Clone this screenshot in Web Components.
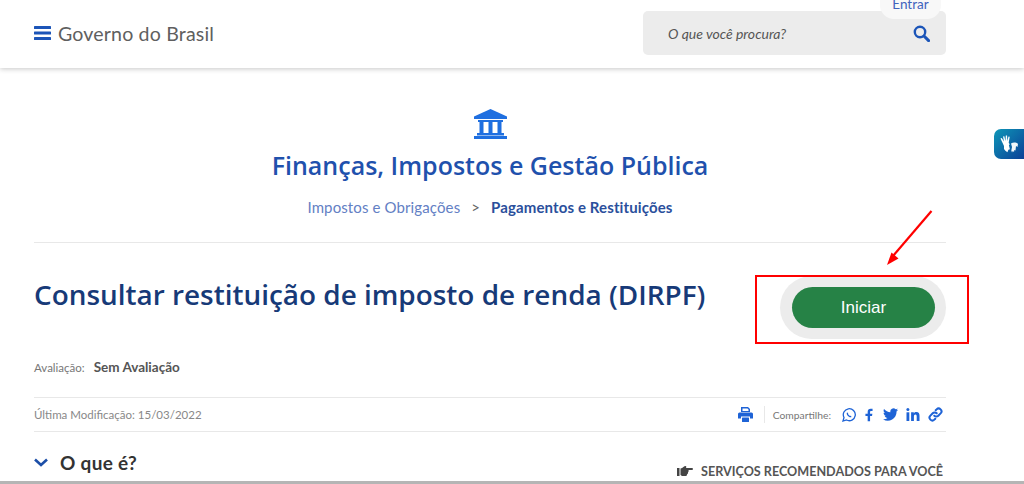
<!DOCTYPE html>
<html lang="pt-BR"><head><meta charset="utf-8"><title>Consultar restituição</title>
<style>
html,body{margin:0;padding:0;background:#fff;height:484px;overflow:hidden}
body{font-family:Lato,"Open Sans",sans-serif;position:relative}
gov-bottom{position:absolute;left:0;right:0;bottom:0}
</style></head><body>
<gov-header></gov-header>
<gov-category></gov-category>
<gov-main></gov-main>
<vlibras-tab></vlibras-tab>
<gov-bottom></gov-bottom>
<script>
function def(name,html){customElements.define(name,class extends HTMLElement{constructor(){super();this.attachShadow({mode:'open'}).innerHTML=html}})}
const blue='#1c55b8', bright='#1e63d6';
def('gov-header',`<style>
:host{display:flex;align-items:flex-start;justify-content:space-between;height:68px;padding:0 78px 0 34px;box-sizing:border-box;background:#fff;box-shadow:0 1px 5px rgba(0,0,0,.22);position:relative}
.brand{display:flex;align-items:center;gap:7px;height:66px;font-size:19.6px;color:#5f5f5f;letter-spacing:.15px}
.search{width:303px;height:44px;margin-top:11px;background:#ececec;border-radius:5px;display:flex;align-items:center;justify-content:space-between;padding:0 16px 0 25px;box-sizing:border-box;position:relative;font-size:14px;font-style:italic;color:#555}
.entrar{position:absolute;left:237px;top:-11px;width:61px;height:19px;background:#f8f8f8;border-radius:0 0 14px 14px;text-align:center;font-style:normal;font-size:13.5px;line-height:9px;color:#3f63bd}
svg{display:block}
</style><div class="brand"><svg width="17" height="14" viewBox="0 0 17 14" fill="${blue}"><rect width="17" height="3" y="0" rx=".6"/><rect width="17" height="3" y="5.5" rx=".6"/><rect width="17" height="3" y="11" rx=".6"/></svg><span>Governo do Brasil</span></div>
<div class="search"><span>O que você procura?</span><svg width="17" height="17" viewBox="0 0 17 17" fill="none" stroke="${blue}"><circle cx="7" cy="7" r="5.2" stroke-width="2.4"/><path d="M11 11l4.6 4.6" stroke-width="3" stroke-linecap="round"/></svg><div class="entrar">Entrar</div></div>`);
def('gov-category',`<style>
:host{display:flex;flex-direction:column;align-items:center;margin:0 78px 0 34px;padding-top:41px;height:133px;box-sizing:content-box;border-bottom:1px solid #e8e8e8;color:${blue}}
svg{display:block}
h2{margin:10px 0 0;font-family:"Open Sans",sans-serif;font-size:25px;line-height:32px;font-weight:600;letter-spacing:0;color:#1f51ad;white-space:nowrap}
nav{margin-top:16px;display:flex;align-items:center;font-size:15px;line-height:20px;letter-spacing:.12px}
.a{color:#6380c4}.s{color:#666;margin:0 11px}.b{color:#2a4f9c;font-weight:700}
</style><svg width="33" height="30" viewBox="0 0 33 30" fill="#1f6fe0"><path d="M16.5 0L33 7.5V10H0V7.5Z"/><rect x="4" y="11" width="25" height="2"/><rect x="5.5" y="13" width="4" height="11"/><rect x="14.5" y="13" width="4" height="11"/><rect x="23.5" y="13" width="4" height="11"/><rect x="3" y="24" width="27" height="2.5"/><rect y="27" width="33" height="3"/></svg>
<h2>Finanças, Impostos e Gestão Pública</h2>
<nav><span class="a">Impostos e Obrigações</span><span class="s">&gt;</span><span class="b">Pagamentos e Restituições</span></nav>`);
def('start-button',`<style>
:host{display:block;width:166px;height:63px;padding:11px 11px 11px 12px;box-sizing:border-box;background:#ececec;border-radius:32px;flex:none}
div{height:41px;border-radius:21px;background:#268246;color:#fff;font:400 17px/41px "Liberation Sans",sans-serif;text-align:center}
</style><div>Iniciar</div>`);
def('share-bar',`<style>
:host{display:flex;align-items:center;justify-content:space-between;height:33px;border-top:1px solid #e8e8e8;border-bottom:1px solid #e8e8e8;font-size:11.5px;color:#888}
.r{display:flex;align-items:center;color:#777}
svg{display:block}
.sep{width:1px;height:17px;background:#e8e8e8;margin:0 8px 0 11px}
.lbl{font-size:10.3px;margin-right:11px}
.i{display:flex;align-items:center;gap:8px;margin-right:3px}
.wa{margin-right:1px}.fb{margin-right:2px}
</style><span>Última Modificação: 15/03/2022</span>
<div class="r">
<svg width="15" height="15" viewBox="0 0 15 15" fill="${bright}"><path d="M3 0h7l2 2v3H3zM4.500 1.500v2.500h6V2.500L9.500 1.500z" fill-rule="evenodd"/><path d="M1.500 5.500h12A1.500 1.500 0 0 1 15 7v4.500h-3V9.500H3v2H0V7A1.500 1.500 0 0 1 1.500 5.500z"/><rect x="4" y="10.500" width="7" height="4.500" rx=".5"/></svg>
<div class="sep"></div><span class="lbl">Compartilhe:</span>
<div class="i">
<svg class="wa" width="14" height="14" viewBox="0 0 14 14" fill="none" stroke="${bright}" stroke-width="1.300"><path d="M1 13l1-3.500A6 6 0 1 1 4.500 12z"/><path d="M5 4.500c-.8 1 0 2.500 1 3.500s2.500 1.700 3.500 1l-.6-1.300-1 .3-2-2 .4-1z" fill="${bright}" stroke="none"/></svg>
<svg class="fb" width="8" height="14" viewBox="0 0 9 14" fill="${bright}"><path d="M3 14V8H.5V5.500H3V3.500C3 1.200 4.300 0 6.300 0H8.500V2.500H7C6 2.500 5.700 3 5.700 3.800V5.500H8.300L7.900 8H5.700V14z"/></svg>
<svg width="15" height="13" viewBox="0 0 16 13" fill="${bright}"><path d="M16 1.500l-1.900.5c.7-.4 1.200-1.100 1.500-1.800-.7.4-1.400.7-2.100.8A3.300 3.300 0 0 0 7.900 4C5.200 3.900 2.800 2.600 1.100.6.200 2.100.7 4 2.100 5c-.5 0-1-.2-1.500-.4 0 1.600 1.100 3 2.600 3.300-.5.100-1 .1-1.500 0 .4 1.300 1.600 2.200 3.100 2.300A6.700 6.700 0 0 1 0 11.500 9.300 9.300 0 0 0 14.400 3.200c.6-.4 1.200-1 1.600-1.700z"/></svg>
<svg width="14" height="13" viewBox="0 0 13 13" fill="${bright}"><rect y="4.300" width="2.800" height="8.700"/><circle cx="1.400" cy="1.500" r="1.500"/><path d="M4.600 4.300h2.700v1.200c.5-.9 1.500-1.400 2.600-1.400C12.200 4.100 13 5.600 13 7.800V13h-2.800V8.400c0-1.100-.3-1.900-1.300-1.900s-1.500.8-1.500 1.900V13H4.600z"/></svg>
<svg width="15" height="15" viewBox="0 0 15 15" fill="none" stroke="${bright}" stroke-width="2" stroke-linecap="round"><path d="M6.300 8.700a2.800 2.800 0 0 0 4 0l2.300-2.300a2.800 2.800 0 0 0-4-4L7.700 3.300"/><path d="M8.700 6.300a2.800 2.800 0 0 0-4 0L2.400 8.600a2.800 2.800 0 0 0 4 4l.9-.9"/></svg>
</div></div>`);
def('gov-main',`<style>
:host{display:block;margin:0 78px 0 34px;position:relative}
.top{display:flex;justify-content:space-between;align-items:flex-start;padding-top:33px;height:116px;box-sizing:border-box}
h1{margin:0;font-family:"Open Sans",sans-serif;font-size:27.9px;line-height:36px;font-weight:600;color:#173a78;white-space:nowrap}
.rate{display:flex;align-items:baseline;gap:9px;height:38px;font-size:11.500px;color:#777}
.rate b{font-size:13.500px;font-weight:700;color:#555}
.more{display:flex;justify-content:space-between;height:50px}
.q{display:flex;align-items:center;gap:12px;height:30px;font-size:19px;font-weight:700;color:#333;letter-spacing:.3px;margin-top:15px}
.rec{display:flex;align-items:center;gap:8px;height:20px;margin-top:29px;font-size:12.600px;font-weight:700;color:#555;padding-right:3px}
svg{display:block}
.box{position:absolute;left:721px;top:32px;width:214px;height:69px;box-sizing:border-box;border:2px solid #f00}
.arrow{position:absolute;left:850px;top:-33px}
</style>
<div class="top"><h1>Consultar restituição de imposto de renda (DIRPF)</h1><start-button></start-button></div>
<div class="rate"><span>Avaliação:</span><b>Sem Avaliação</b></div>
<share-bar></share-bar>
<div class="more"><div class="q"><svg width="14" height="9" viewBox="0 0 14 9" fill="none" stroke="#1c4fa8" stroke-width="2.600"><path d="M1 1.500L7 7l6-5.500"/></svg><span>O que é?</span></div>
<div class="rec"><svg width="16" height="13" viewBox="0 0 16 13" fill="#444"><path d="M0 3h2.500v8H0zM3.500 3.500C6 3 7 1 8.500 1c1 0 1 1 .5 2h6a1 1 0 0 1 0 2h-3.500c.5 1-.2 2-.5 2.500.2 1-.5 1.500-1 2 0 1-.6 1.500-2 1.500H6c-1 0-2-.5-2.500-1z"/></svg><span>SERVIÇOS RECOMENDADOS PARA VOCÊ</span></div></div>
<div class="box"></div>
<svg class="arrow" width="50" height="58" viewBox="0 0 50 58"><path d="M47.500 1L9 46" stroke="#f00" stroke-width="2.200" fill="none"/><path d="M3 55L7.500 42.500 14.500 48.500z" fill="#f00"/></svg>`);
def('vlibras-tab',`<style>
:host{position:absolute;right:0;top:129px;width:30px;height:30px;border-radius:7px 0 0 7px;background:linear-gradient(135deg,#0e97b8,#0b3f96)}
svg{display:block}
</style><svg width="30" height="30" viewBox="0 0 30 30" fill="#fff"><path d="M10 17L6.500 9.500l1.200-.5 2.300 3.500L9 7.500l1.300-.3 1.200 4.800.3-5.500h1.300l.2 5.500 1.200-4.500 1.200.3-1 6 1 1.500-.8 1 1 4-1.500.5-1 2.500-2-1.500L10 20z"/><path d="M17 14.500c2-1.500 5-1.500 7 .3l-.5 3.200-1.500-1-.5 4.500-1.200-.5-.3 2-1.200-1-.8 1.500-.7-2 .7-3.500z" opacity=".95"/></svg>`);
def('gov-bottom',`<style>:host{display:block;height:3px;background:#b5b5b5}</style>`);
</script></body></html>
